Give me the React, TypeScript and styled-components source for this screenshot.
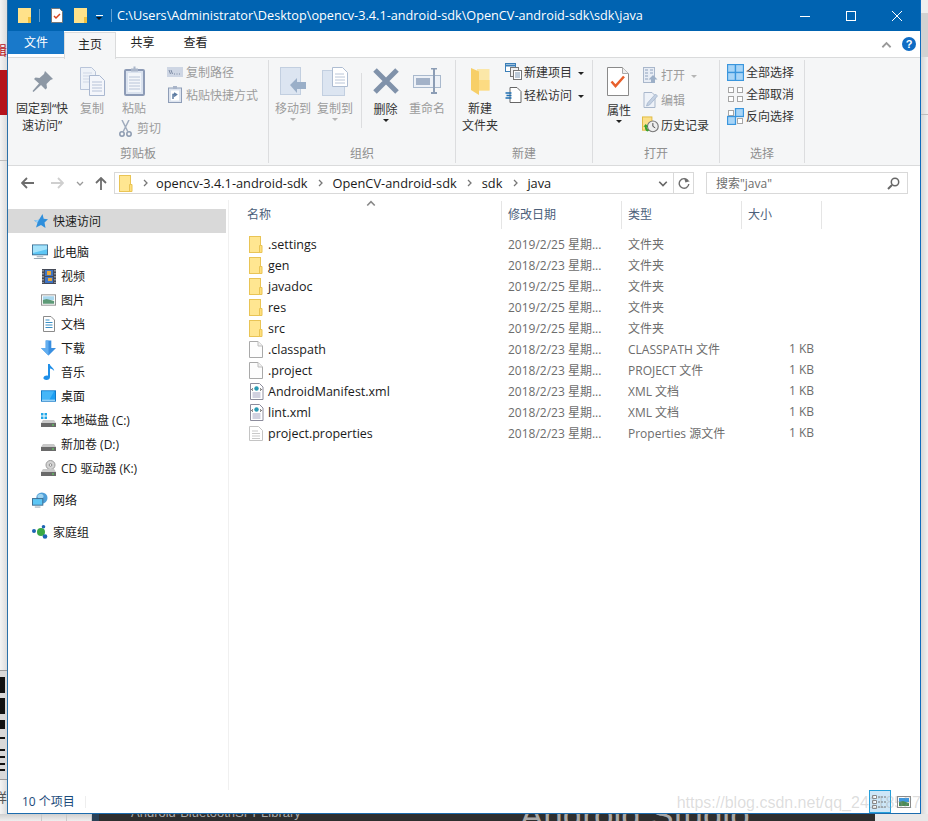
import * as React from "react";
import styled, { createGlobalStyle } from "styled-components";

const UI_FONT = `"Open Sans", "Noto Sans CJK SC", sans-serif`;

const GlobalStyle = createGlobalStyle`
  html, body { margin: 0; padding: 0; background: #ececec; }
  body { font-family: ${UI_FONT}; font-size: 12px; }
  * { box-sizing: border-box; }
`;

/* ---------- icons ---------- */

const Folder = () => (
  <svg width="14" height="17" viewBox="0 0 14 17">
    <rect x=".5" y=".5" width="11" height="16" fill="#ffe691" stroke="#e9c455" />
    <path d="M10.500 9.500h2.500v7h-2.500z" fill="#ffdf7c" stroke="#e9c455" />
  </svg>
);

const Page = () => (
  <svg width="14" height="17" viewBox="0 0 14 17">
    <path d="M.5.5h8.500l4.500 4.500v11.500h-13z" fill="#fdfdfd" stroke="#a9a9a9" />
    <path d="M9 .5v4.500h4.500" fill="#f1f1f1" stroke="#bdbdbd" />
  </svg>
);

const XmlFile = () => (
  <svg width="15" height="17" viewBox="0 0 15 17">
    <path d="M1.500.5h9l3.500 3.500v12.500h-12.500z" fill="#fff" stroke="#8c8c9c" />
    <circle cx="7.500" cy="5.500" r="2.200" fill="#2a9ab3" />
    <path d="M4 5.500l-1.500 1 1.500 1M11 5.500l1.500 1-1.500 1" fill="none" stroke="#555" />
    <path d="M3.500 10h8M3.500 12h8M3.500 14h8" stroke="#a3a3c0" />
  </svg>
);

const PropsFile = () => (
  <svg width="14" height="15" viewBox="0 0 14 15">
    <path d="M.5.5h9l4 4v10h-13z" fill="#fff" stroke="#c4c4c4" />
    <path d="M3 5h6M3 7.500h8M3 10h8M3 12.500h8" stroke="#c9c9c9" />
  </svg>
);

const TitleFolder = () => (
  <svg width="13" height="15" viewBox="0 0 13 15">
    <rect width="13" height="15" fill="#ffe28a" />
    <rect x="10" y="9" width="3" height="6" fill="#f0c040" />
  </svg>
);

const TitleCheckDoc = () => (
  <svg width="12" height="15" viewBox="0 0 12 15">
    <path d="M.5.5h8l3 3v11h-11z" fill="#fff" stroke="#777" />
    <path d="M3 8l2 2 4-4" fill="none" stroke="#d9431e" strokeWidth="1.500" />
  </svg>
);

const Pin = () => (
  <svg width="21" height="21" viewBox="0 0 21 21">
    <path d="M13 0l8 8-2.500 1-4 4 .5 4-1.500 1.500L9 14l-7.500 7-1-1L7 12.500 2 8l1.500-1.500 4 .5 4.500-4z" fill="#8d98a5" />
  </svg>
);

const CopyIcon = () => (
  <svg width="25" height="29" viewBox="0 0 25 29">
    <path d="M.5.5h11l4 4v18h-15z" fill="#eef2f8" stroke="#b9c5da" />
    <path d="M3 6h9M3 9h9M3 12h9M3 15h6" stroke="#cfd7e6" />
    <path d="M9.500 8.500h10l5 5v15h-15z" fill="#f4f6fb" stroke="#aab8d0" />
    <path d="M12 15h10M12 18h10M12 21h10M12 24h10" stroke="#b6c2d8" />
  </svg>
);

const PasteIcon = () => (
  <svg width="21" height="30" viewBox="0 0 21 30">
    <rect x="1" y="4" width="19" height="25" rx="1" fill="#dbe3ef" stroke="#8d9bb6" strokeWidth="2" />
    <rect x="4" y="7" width="13" height="19" fill="#f3f6fa" />
    <path d="M5 11h11M5 14h11M5 17h11M5 20h11M5 23h11" stroke="#b8c4d8" />
    <path d="M7 4V2.500h2.500V.5h2V2.500H14V5.500H7z" fill="#a9b5c9" />
  </svg>
);

const Scissors = () => (
  <svg width="13" height="17" viewBox="0 0 13 17">
    <circle cx="3" cy="14" r="2.200" fill="none" stroke="#8c9ab0" strokeWidth="1.500" />
    <circle cx="10" cy="14" r="2.200" fill="none" stroke="#8c9ab0" strokeWidth="1.500" />
    <path d="M4 12L10 0M9 12L3 0" stroke="#a0acbe" strokeWidth="1.500" />
  </svg>
);

const CopyPath = () => (
  <svg width="16" height="10" viewBox="0 0 16 10">
    <rect width="16" height="10" fill="#ced6e4" />
    <path d="M2 3l1.500 4M4 3l1.500 4" stroke="#7c8aa3" />
    <path d="M7 7h1M9.500 7h1M12 7h1" stroke="#7c8aa3" />
  </svg>
);

const PasteShortcut = () => (
  <svg width="14" height="17" viewBox="0 0 14 17">
    <rect x=".5" y="2" width="13" height="14.500" fill="#dde4ef" stroke="#8e9db7" />
    <rect x="3" y="4.500" width="8" height="10" fill="#fff" />
    <path d="M5 0h4v3H5z" fill="#a9b5c9" />
    <path d="M5 13V8.500h3.500M6 7l2.500 1.500L6 10.500" fill="none" stroke="#5f7da3" strokeWidth="1.500" />
  </svg>
);

const MoveTo = () => (
  <svg width="27" height="29" viewBox="0 0 27 29">
    <rect x=".5" y=".5" width="20" height="27" fill="#dce5f1" stroke="#c2cfe0" />
    <path d="M10 18l7-7v4h9v7h-9v4z" fill="#9aafc8" />
  </svg>
);

const CopyTo = () => (
  <svg width="27" height="29" viewBox="0 0 27 29">
    <rect x=".5" y="3.500" width="22" height="25" fill="#dce5f1" stroke="#c2cfe0" />
    <path d="M10.500.5h10l5 5v14h-15z" fill="#fff" stroke="#aebdd2" />
    <path d="M13 7h9M13 10h10M13 13h10M13 16h10" stroke="#bac6d8" />
  </svg>
);

const DeleteX = () => (
  <svg width="26" height="26" viewBox="0 0 26 26">
    <path d="M2 2l22 22M24 2L2 24" stroke="#8092aa" strokeWidth="5" />
  </svg>
);

const RenameIcon = () => (
  <svg width="28" height="26" viewBox="0 0 28 26">
    <rect x=".5" y="7.500" width="27" height="12" fill="#edf1f7" stroke="#a9b9cd" />
    <rect x="3" y="10" width="14" height="7" fill="#a3b2c8" />
    <path d="M18 .5h6M18 25h6M21 1v24" stroke="#8c9db5" strokeWidth="2" />
  </svg>
);

const NewFolder = () => (
  <svg width="19" height="27" viewBox="0 0 19 27">
    <path d="M6 1h12.500v21.500H6z" fill="#fbe7a8" />
    <path d="M0 0l8 3.500V27L0 22z" fill="#f7cf68" />
    <path d="M8 12h10.500v10.500H8z" fill="#fcdb82" />
  </svg>
);

const NewItem = () => (
  <svg width="17" height="17" viewBox="0 0 17 17">
    <rect x=".5" y=".5" width="10" height="8" fill="#fff" stroke="#3b7fb8" />
    <path d="M1 2.500h9" stroke="#3b7fb8" strokeWidth="2" />
    <rect x="5.500" y="4.500" width="8" height="9" fill="#f2f2f2" stroke="#777" />
    <rect x="8.500" y="7.500" width="8" height="9" fill="#fff" stroke="#777" />
    <path d="M10 10h5M10 12h5M10 14h5" stroke="#7d97b3" />
  </svg>
);

const EasyAccess = () => (
  <svg width="16" height="16" viewBox="0 0 16 16">
    <path d="M4.500.5h7l4 4v11h-11z" fill="#fff" stroke="#666" />
    <path d="M0 6h6M1 8.500h5M0 11h6" stroke="#1f6fb2" strokeWidth="1.300" />
  </svg>
);

const PropertiesIcon = () => (
  <svg width="22" height="29" viewBox="0 0 22 29">
    <path d="M.5.5h15l6 6v22h-21z" fill="#fff" stroke="#8a8a8a" />
    <path d="M15.500.5v6h6" fill="#eee" stroke="#aaa" />
    <path d="M4.500 14.500l4 4.500 8.500-9.500" fill="none" stroke="#e8602c" strokeWidth="2.500" />
  </svg>
);

const OpenIcon = () => (
  <svg width="15" height="16" viewBox="0 0 15 16">
    <rect x=".5" y=".5" width="11" height="15" fill="#e8edf5" stroke="#a9b7cb" />
    <path d="M2 3h3M7 3h3M2 6h3M7 6h3M2 9h3M2 12h3" stroke="#8fa2bd" />
    <path d="M10 8l4.500 4.500H12V16H8v-3.500H5.500z" fill="#9cafc7" />
  </svg>
);

const EditIcon = () => (
  <svg width="14" height="16" viewBox="0 0 14 16">
    <path d="M.5.5h8l3 3v12H.5z" fill="#eef2f8" stroke="#a9b7cb" />
    <path d="M3 14l1-3 8-9 2 2-8 9z" fill="#c4d1e2" stroke="#9fb0c8" strokeWidth=".7" />
  </svg>
);

const HistoryIcon = () => (
  <svg width="18" height="17" viewBox="0 0 18 17">
    <rect x=".5" y=".5" width="10" height="14" fill="#fbe08a" stroke="#e0b93f" />
    <circle cx="11.500" cy="10.500" r="5.700" fill="#eee" stroke="#777" strokeWidth="1.200" />
    <path d="M11.500 7v3.500l2.500 1.500" fill="none" stroke="#444" />
    <path d="M1.500 11l2.500-3 2.500 3H5c0 2 1 3 2.500 3.500L6 16c-2-.5-3-2-3-5z" fill="#35a12e" />
  </svg>
);

const BLUE_TILE = { fill: "#a8d5f7", stroke: "#3a96dd", strokeWidth: 1.300 };
const GRAY_TILE = { fill: "#fff", stroke: "#a6a6a6" };

const SelectAll = () => (
  <svg width="17" height="17" viewBox="0 0 17 17">
    <rect x=".5" y=".5" width="8" height="8" {...BLUE_TILE} />
    <rect x="8.500" y=".5" width="8" height="8" {...BLUE_TILE} />
    <rect x=".5" y="8.500" width="8" height="8" {...BLUE_TILE} />
    <rect x="8.500" y="8.500" width="8" height="8" {...BLUE_TILE} />
  </svg>
);

const SelectNone = () => (
  <svg width="17" height="17" viewBox="0 0 17 17">
    <rect x="1.500" y="1.500" width="5" height="5" {...GRAY_TILE} />
    <rect x="10.500" y="1.500" width="5" height="5" {...GRAY_TILE} />
    <rect x="1.500" y="10.500" width="5" height="5" {...GRAY_TILE} />
    <rect x="10.500" y="10.500" width="5" height="5" {...GRAY_TILE} />
  </svg>
);

const SelectInvert = () => (
  <svg width="17" height="17" viewBox="0 0 17 17">
    <rect x="1.500" y="2.500" width="5" height="5" {...GRAY_TILE} />
    <rect x="10.500" y="10.500" width="5" height="5" {...GRAY_TILE} />
    <rect x="8.500" y=".5" width="8" height="8" {...BLUE_TILE} />
    <rect x=".5" y="8.500" width="8" height="8" {...BLUE_TILE} />
  </svg>
);

const Star = () => (
  <svg width="14" height="14" viewBox="0 0 14 14">
    <path d="M8.500 0l1.200 4.800L14 5.300l-3.500 3.200L11.500 14 7 11 2 13.500 3.500 8.800 0 6.500l5-.8z" fill="#2f8fdc" />
    <path d="M0 6.500L5 5.700 3.500 8.800z" fill="#9bd0f5" />
  </svg>
);

const Monitor = () => (
  <svg width="17" height="16" viewBox="0 0 17 16">
    <rect x=".5" y=".5" width="16" height="10.500" fill="#5cc6f5" stroke="#3d6b8f" />
    <path d="M1 1h15v4L1 9z" fill="#a5e3fb" />
    <path d="M5 12.500h7v1H5zM2 14.500h13v1H2z" fill="#9aa9b5" />
  </svg>
);

const VideoIcon = () => (
  <svg width="14" height="15" viewBox="0 0 14 15">
    <rect width="14" height="15" fill="#454a57" />
    <rect x="3" y="1" width="8" height="6" fill="#3f74c4" />
    <rect x="3" y="8" width="8" height="6" fill="#3f74c4" />
    <path d="M5 2h4v4H5zM6 9h4v3H6z" fill="#e8a83a" />
    <path d="M1 1v13M13 1v13" stroke="#d8d8d8" strokeDasharray="1.500 1.500" />
  </svg>
);

const PictureIcon = () => (
  <svg width="16" height="12" viewBox="0 0 16 12">
    <rect x=".5" y=".5" width="15" height="11" fill="#fff" stroke="#8d8d8d" />
    <rect x="2" y="2" width="12" height="4" fill="#a9d7ee" />
    <path d="M2 6l4-1 8 2v3H2z" fill="#5d9a77" />
  </svg>
);

const DocIcon = () => (
  <svg width="12" height="16" viewBox="0 0 12 16">
    <path d="M.5.5h7.500l3.500 3.500v11.500h-11z" fill="#fff" stroke="#8b8b8b" />
    <path d="M2.500 4h4M2.500 6.500h7M2.500 9h7M2.500 11.500h7" stroke="#3b8fc4" />
  </svg>
);

const DownloadIcon = () => (
  <svg width="16" height="16" viewBox="0 0 16 16">
    <path d="M5 0h6v8h5l-8 8-8-8h5z" fill="#3a8fe0" />
    <path d="M5 0h3v16L0 8h5z" fill="#62aef0" />
  </svg>
);

const MusicIcon = () => (
  <svg width="12" height="16" viewBox="0 0 12 16">
    <path d="M5 0h1.800c.4 2.500 4 3.500 4.400 7-1.300-1.500-2.700-2.300-4.200-2.500V13c0 1.800-1.500 3-3.500 3S0 15 .5 13.500 3 11 5 11.700z" fill="#1f8fe8" />
  </svg>
);

const DesktopIcon = () => (
  <svg width="16" height="12" viewBox="0 0 16 12">
    <rect x=".5" y=".5" width="15" height="11" fill="#1e9ff2" stroke="#0c74c4" />
    <path d="M1 1h13L9 10H1z" fill="#45b6f8" />
    <path d="M1 10.500h14" stroke="#d9f1ff" />
  </svg>
);

const Drive = ({ win }: { win?: boolean }) => (
  <svg width="15" height="14" viewBox="0 0 15 14">
    {win && <path d="M0 0h2.500v2.500H0zM3.500 0H6v2.500H3.500zM0 3.500h2.500V6H0zM3.500 3.500H6V6H3.500z" fill="#22a7e8" />}
    <path d="M2 7h11l2 3H0z" fill="#c9c9c9" />
    <rect y="10" width="15" height="4" fill="#6a6a6a" />
    <rect x="11" y="11.500" width="2" height="1" fill="#5ce05c" />
  </svg>
);

const CdDrive = () => (
  <svg width="15" height="16" viewBox="0 0 15 16">
    <circle cx="9.500" cy="5" r="4.500" fill="#d4d4d4" stroke="#9c9c9c" />
    <circle cx="9.500" cy="5" r="1.300" fill="#fff" stroke="#8c8c8c" />
    <path d="M2 9h11l2 3H0z" fill="#c9c9c9" />
    <rect y="12" width="15" height="4" fill="#6a6a6a" />
    <rect x="11" y="13.500" width="2" height="1" fill="#5ce05c" />
  </svg>
);

const NetworkIcon = () => (
  <svg width="17" height="16" viewBox="0 0 17 16">
    <circle cx="10.500" cy="6" r="6" fill="#4f9fd8" />
    <path d="M6 3c2-2 5-2 6 0s-1 4-3 4-4-2-3-4z" fill="#9ed3f0" />
    <rect x=".5" y="6.500" width="11" height="7" fill="#5cc6f5" stroke="#3d6b8f" />
    <path d="M3 15.500h6" stroke="#8e9eab" />
  </svg>
);

const HomegroupIcon = () => (
  <svg width="16" height="14" viewBox="0 0 16 14">
    <circle cx="2" cy="6" r="2" fill="#1e64b4" />
    <circle cx="9" cy="7" r="4" fill="#3aa845" />
    <circle cx="11.500" cy="1.800" r="1.800" fill="#1e64b4" />
    <circle cx="13" cy="11.500" r="2.300" fill="#1e64b4" />
  </svg>
);

const DetailsView = () => (
  <svg width="16" height="14" viewBox="0 0 16 14">
    <path d="M.5.5h4v3h-4zM.5 5.500h4v3h-4zM.5 10.500h4v3h-4z" fill="#fff" stroke="#888" />
    <path d="M6 2h9M6 7h9M6 12h9" stroke="#777" strokeDasharray="2 1" />
  </svg>
);

const ThumbView = () => (
  <svg width="14" height="12" viewBox="0 0 14 12">
    <rect x=".5" y=".5" width="13" height="11" fill="#fff" stroke="#8a8a8a" />
    <rect x="2" y="2" width="10" height="4" fill="#3f97dd" />
    <path d="M2 6l4-1 6 2v3H2z" fill="#4b8b57" />
  </svg>
);

const Chevron = ({ dir, color = "#777", size = 8 }: { dir: "up" | "down" | "right"; color?: string; size?: number }) => {
  const d = dir === "up" ? "M1 6l3-3 3 3" : dir === "down" ? "M1 3l3 3 3-3" : "M3 1l3 3-3 3";
  return (
    <svg width={size} height={size} viewBox="0 0 8 8">
      <path d={d} fill="none" stroke={color} strokeWidth="1.300" />
    </svg>
  );
};

const ArrowLeft = () => (
  <svg width="13" height="12" viewBox="0 0 13 12">
    <path d="M6 1L1 6l5 5M1 6h12" fill="none" stroke="#6d6d6d" strokeWidth="1.800" />
  </svg>
);

const ArrowRight = () => (
  <svg width="13" height="12" viewBox="0 0 13 12">
    <path d="M7 1l5 5-5 5M12 6H0" fill="none" stroke="#cfcfcf" strokeWidth="1.800" />
  </svg>
);

const ArrowUp = () => (
  <svg width="12" height="13" viewBox="0 0 12 13">
    <path d="M1 6l5-5 5 5M6 1v12" fill="none" stroke="#6d6d6d" strokeWidth="1.800" />
  </svg>
);

const Refresh = () => (
  <svg width="12" height="13" viewBox="0 0 12 13">
    <path d="M9.800 3.500A4.800 4.800 0 1 0 10.800 7" fill="none" stroke="#6d6d6d" strokeWidth="1.400" />
    <path d="M6.800 0v5h4.500z" fill="#6d6d6d" transform="rotate(-15 9 3)" />
  </svg>
);

const Magnifier = () => (
  <svg width="13" height="13" viewBox="0 0 13 13">
    <circle cx="8" cy="5" r="3.700" fill="none" stroke="#666" strokeWidth="1.500" />
    <path d="M5 8l-4 4" stroke="#666" strokeWidth="2" />
  </svg>
);

/* ---------- backdrop around the window ---------- */

const Screen = styled.div`
  width: 928px;
  height: 821px;
  overflow: hidden;
  display: grid;
  grid-template-columns: 7px 914px 7px;
  grid-template-rows: 814px 7px;
`;

const LeftStrip = styled.div`
  display: flex;
  flex-direction: column;
  background: linear-gradient(to right, #f4f4f4, #dcdcdc);
`;

const RightStrip = styled.div`
  display: flex;
  flex-direction: column;
  background: linear-gradient(to left, #f2f2f2, #d6d6d6);
`;

const StripBlock = styled.div<{ $h: number; $bg?: string; $line?: boolean }>`
  flex: none;
  height: ${p => p.$h}px;
  background: ${p => p.$bg || "transparent"};
  border-bottom: ${p => (p.$line ? "1px solid #bdbdbd" : "none")};
`;

const EdgeGlyph = styled.div<{ $color: string; $top: number; $bottom: number }>`
  flex: none;
  height: 13px;
  margin: ${p => p.$top}px 0 ${p => p.$bottom}px;
  color: ${p => p.$color};
  font-size: 13px;
  line-height: 13px;
  overflow: hidden;
  direction: rtl;
`;

const BlackBars = styled.div`
  flex: none;
  height: 110px;
  border-top: 1px solid #9a9a9a;
  border-bottom: 1px solid #9a9a9a;
  background:
    linear-gradient(
      to bottom,
      transparent 0 6px,
      #111 6px 22px,
      transparent 22px 27px,
      #111 27px 43px,
      transparent 43px 49px,
      #111 49px 58px,
      transparent 58px 66px,
      #111 66px 68px,
      transparent 68px 78px,
      #111 78px 80px,
      transparent 80px 85px,
      #111 85px 87px,
      transparent 87px 92px,
      #111 92px 94px,
      transparent 94px 98px,
      #111 98px 100px,
      transparent 100px
    )
    left / 5px 100% no-repeat,
    #d9d9d9;
`;

const BottomStrip = styled.div`
  grid-column: 1 / 4;
  display: flex;
  background: #e8e8e8;
`;

const BottomCell = styled.div<{ $w: number }>`
  flex: none;
  width: ${p => p.$w}px;
  border-right: 1px solid #c9c9c9;
  background: linear-gradient(to bottom, #cfcfcf, #efefef);
`;

const DarkBar = styled.div`
  flex: none;
  width: 783px;
  background: #2e2e2e;
  color: #a8a8a8;
  overflow: hidden;
  display: flex;
`;

const BarIcon = styled.div`
  flex: none;
  width: 7px;
  background: #2a4258;
`;

const BarSmall = styled.div`
  margin: -9px 0 0 32px;
  flex: none;
  width: 389px;
  font-family: "Liberation Sans", sans-serif;
  font-size: 13px;
  line-height: 15px;
  white-space: nowrap;
`;

const BarLarge = styled.div`
  margin-top: -18px;
  flex: none;
  font-family: "Liberation Sans", sans-serif;
  font-size: 35px;
  line-height: 38px;
  white-space: nowrap;
`;

/* ---------- window ---------- */

const Window = styled.div`
  position: relative;
  display: flex;
  flex-direction: column;
  background: #fff;
  border-left: 1px solid #2b70a8;
  border-right: 1px solid #0f6cbd;
  border-bottom: 1px solid #1c6cae;
`;

const TitleBar = styled.div`
  flex: none;
  height: 31px;
  background: #0063b1;
  color: #fff;
  display: flex;
  align-items: center;
  padding-left: 10px;
  white-space: nowrap;
`;

const QuickSep = styled.div<{ $after: number }>`
  width: 1px;
  height: 13px;
  margin: 0 ${p => p.$after}px 0 8px;
  background: #5d9dd0;
`;

const QuickSlot = styled.div<{ $left?: number }>`
  margin-left: ${p => p.$left || 0}px;
  display: flex;
`;

const QuickMenu = styled.div`
  width: 7px;
  height: 6px;
  margin: 4px 0 0 9px;
  border-top: 1px solid #fff;
  position: relative;
  &::after {
    content: "";
    position: absolute;
    left: 0;
    top: 1px;
    border: 3.500px solid transparent;
    border-top-color: #111;
    border-bottom: none;
  }
`;

const TitleText = styled.div`
  flex: 1;
  font-size: 12.700px;
  line-height: 31px;
`;

const WinButtons = styled.div`
  display: flex;
`;

const WinButton = styled.div`
  width: 46px;
  height: 31px;
  display: flex;
  align-items: center;
  justify-content: center;
`;

const TabRow = styled.div`
  flex: none;
  height: 26px;
  display: flex;
  align-items: flex-start;
  position: relative;
`;

const FileTab = styled.div`
  width: 56px;
  height: 23px;
  background: #1979ca;
  color: #fff;
  text-align: center;
  line-height: 23px;
`;

const Tab = styled.div<{ $active?: boolean }>`
  width: ${p => (p.$active ? 52 : 53)}px;
  height: ${p => (p.$active ? 27 : 23)}px;
  line-height: 23px;
  margin-top: ${p => (p.$active ? 1 : 0)}px;
  text-align: center;
  color: #222;
  background: ${p => (p.$active ? "#f5f6f7" : "transparent")};
  border: ${p => (p.$active ? "1px solid #dadbdc" : "none")};
  border-bottom: none;
  position: relative;
  z-index: 1;
`;

const TabTools = styled.div`
  margin-left: auto;
  height: 26px;
  display: flex;
  align-items: center;
  gap: 10px;
  padding-right: 4px;
`;

const HelpDot = styled.div`
  width: 14px;
  height: 14px;
  border-radius: 50%;
  background: #0f6cc4;
  color: #fff;
  font: bold 11px/14px "Liberation Sans", sans-serif;
  text-align: center;
`;

const Ribbon = styled.div`
  flex: none;
  height: 109px;
  background: #f5f6f7;
  border-top: 1px solid #dadbdc;
  border-bottom: 1px solid #dadbdc;
  padding: 2px 0;
  display: flex;
`;

const Group = styled.div<{ $w: number }>`
  flex: none;
  width: ${p => p.$w}px;
  border-right: 1px solid #dcdddf;
  display: flex;
  flex-direction: column;
`;

const GroupBody = styled.div<{ $pad?: number }>`
  flex: 1;
  display: flex;
  min-height: 0;
  padding-left: ${p => p.$pad || 0}px;
`;

const GroupLabel = styled.div`
  flex: none;
  height: 18px;
  line-height: 18px;
  text-align: center;
  color: #8f8f8f;
`;

const BigButton = styled.div<{ $w: number; $off?: boolean }>`
  flex: none;
  width: ${p => p.$w}px;
  padding-top: 6px;
  display: flex;
  flex-direction: column;
  align-items: center;
  color: ${p => (p.$off ? "#9c9c9c" : "#333")};
`;

const BigIcon = styled.div<{ $shift?: number }>`
  height: 30px;
  margin-right: ${p => p.$shift || 0}px;
  display: flex;
  align-items: center;
  justify-content: center;
`;

const BigLabel = styled.div<{ $top?: number }>`
  margin-top: ${p => p.$top ?? 4}px;
  line-height: 17px;
  text-align: center;
  white-space: nowrap;
`;

const Caret = styled.div<{ $off?: boolean }>`
  margin-top: 1px;
  border: 3px solid transparent;
  border-top-color: ${p => (p.$off ? "#b5b5b5" : "#222")};
  border-bottom: none;
`;

const PasteStack = styled.div`
  flex: none;
  width: 52px;
  display: flex;
  flex-direction: column;
`;

const SmallStack = styled.div<{ $row: number; $top: number; $left?: number }>`
  flex: none;
  margin-left: ${p => p.$left || 0}px;
  padding-top: ${p => p.$top}px;
  display: grid;
  grid-auto-rows: ${p => p.$row}px;
`;

const SmallButton = styled.div<{ $slot: number; $off?: boolean; $gap?: number }>`
  display: flex;
  align-items: center;
  gap: ${p => p.$gap ?? 3}px;
  white-space: nowrap;
  color: ${p => (p.$off ? "#9c9c9c" : "#333")};
  > svg {
    flex: none;
    width: ${p => p.$slot}px;
  }
`;

const CutButton = styled(SmallButton)`
  padding: 2px 0 0 7px;
`;

const SmallCaret = styled.div<{ $off?: boolean }>`
  margin-left: 4px;
  border: 3px solid transparent;
  border-top-color: ${p => (p.$off ? "#b5b5b5" : "#222")};
  border-bottom: none;
  margin-top: 3px;
`;

const InnerSep = styled.div`
  flex: none;
  width: 1px;
  height: 55px;
  margin: 13px 3px 0 5px;
  background: #dcdddf;
`;

const AddressRow = styled.div`
  flex: none;
  height: 34px;
  display: flex;
  align-items: center;
`;

const NavArrows = styled.div`
  flex: none;
  width: 106px;
  padding-left: 13px;
  display: flex;
  align-items: center;
`;

const ArrowSlot = styled.span<{ $left: number }>`
  margin-left: ${p => p.$left}px;
  display: flex;
`;

const AddressBox = styled.div`
  flex: none;
  width: 580px;
  height: 22px;
  border: 1px solid #d9d9d9;
  display: flex;
  align-items: center;
  padding-left: 4px;
`;

const Crumb = styled.span`
  font-size: 12.800px;
  color: #1a1a1a;
  line-height: 20px;
`;

const CrumbSep = styled.span<{ $w: number }>`
  width: ${p => p.$w}px;
  display: flex;
  justify-content: center;
`;

const AddressEnd = styled.div`
  margin-left: auto;
  display: flex;
  align-items: center;
  height: 100%;
`;

const EndCell = styled.div<{ $line?: boolean }>`
  width: 20px;
  height: 100%;
  display: flex;
  align-items: center;
  justify-content: center;
  border-left: ${p => (p.$line ? "1px solid #d9d9d9" : "none")};
`;

const SearchBox = styled.div`
  flex: none;
  width: 202px;
  height: 22px;
  margin-left: 12px;
  border: 1px solid #d9d9d9;
  display: flex;
  align-items: center;
  justify-content: space-between;
  padding: 0 7px 0 9px;
  color: #6d6d6d;
`;

const Body = styled.div`
  flex: 1;
  min-height: 0;
  display: flex;
`;

const NavPane = styled.div`
  flex: none;
  width: 221px;
  border-right: 1px solid #f0f0f0;
  padding: 9px 2px 0 0;
`;

const NavRow = styled.div<{ $child?: boolean; $active?: boolean; $gap?: number }>`
  height: 24px;
  margin-top: ${p => p.$gap || 0}px;
  padding-left: ${p => (p.$active ? 26 : p.$child ? 33 : 24)}px;
  background: ${p => (p.$active ? "#d9d9d9" : "transparent")};
  display: flex;
  align-items: center;
  color: #1a1a1a;
  white-space: nowrap;
`;

const NavIcon = styled.div<{ $child?: boolean; $active?: boolean }>`
  flex: none;
  width: ${p => (p.$active ? 14 : p.$child ? 15 : 16)}px;
  margin-right: 5px;
  display: flex;
  justify-content: center;
`;

const MainPane = styled.div`
  flex: 1;
  min-width: 0;
`;

const COLUMNS = "273px 120px 120px 80px";

const HeaderRow = styled.div`
  height: 28px;
  margin-top: 1px;
  display: grid;
  grid-template-columns: ${COLUMNS};
`;

const HeaderCell = styled.div<{ $pad: number }>`
  position: relative;
  padding-left: ${p => p.$pad}px;
  border-right: 1px solid #e5e5e5;
  color: #4c607a;
  line-height: 27px;
`;

const SortMark = styled.div`
  position: absolute;
  left: 137px;
  top: -3px;
  display: flex;
`;

const FileList = styled.div`
  padding-top: 5px;
`;

const FileRow = styled.div`
  height: 21px;
  display: grid;
  grid-template-columns: ${COLUMNS};
  align-items: center;
  color: #6d6d6d;
`;

const NameCell = styled.div`
  padding-left: 20px;
  display: flex;
  align-items: center;
  color: #1a1a1a;
  font-size: 12.500px;
`;

const FileIconSlot = styled.div`
  flex: none;
  width: 19px;
  display: flex;
`;

const InfoCell = styled.div<{ $right?: boolean }>`
  padding: ${p => (p.$right ? "0 8px 2px 0" : "0 0 2px 6px")};
  text-align: ${p => (p.$right ? "right" : "left")};
  white-space: nowrap;
`;

const StatusBar = styled.div`
  flex: none;
  height: 23px;
  display: flex;
  align-items: center;
  padding-left: 14px;
  color: #1a4a7a;
`;

const StatusCount = styled.div`
  width: 64px;
  height: 12px;
  line-height: 12px;
  border-right: 1px solid #eee;
`;

const ViewButtons = styled.div`
  margin-left: auto;
  height: 100%;
  display: flex;
  align-items: center;
  padding-right: 8px;
`;

const ViewButton = styled.div<{ $active?: boolean }>`
  width: ${p => (p.$active ? 22 : 17)}px;
  margin-left: ${p => (p.$active ? 0 : 4)}px;
  height: 23px;
  display: flex;
  align-items: center;
  justify-content: center;
  background: ${p => (p.$active ? "#cde6f7" : "transparent")};
  border: ${p => (p.$active ? "1px solid #26a0da" : "none")};
`;

const Watermark = styled.div`
  position: absolute;
  right: -1px;
  bottom: 0;
  font-family: "Liberation Sans", sans-serif;
  font-size: 16px;
  line-height: 20px;
  color: rgba(150, 150, 150, 0.32);
  white-space: nowrap;
  pointer-events: none;
`;

/* ---------- data ---------- */

const FOLDER_ROW = { type: "文件夹", size: "" };

const FILES: { name: string; date: string; type: string; size: string; icon: React.ReactNode }[] = [
  { name: ".settings", date: "2019/2/25 星期...", ...FOLDER_ROW, icon: <Folder /> },
  { name: "gen", date: "2018/2/23 星期...", ...FOLDER_ROW, icon: <Folder /> },
  { name: "javadoc", date: "2019/2/25 星期...", ...FOLDER_ROW, icon: <Folder /> },
  { name: "res", date: "2019/2/25 星期...", ...FOLDER_ROW, icon: <Folder /> },
  { name: "src", date: "2019/2/25 星期...", ...FOLDER_ROW, icon: <Folder /> },
  { name: ".classpath", date: "2018/2/23 星期...", type: "CLASSPATH 文件", size: "1 KB", icon: <Page /> },
  { name: ".project", date: "2018/2/23 星期...", type: "PROJECT 文件", size: "1 KB", icon: <Page /> },
  { name: "AndroidManifest.xml", date: "2018/2/23 星期...", type: "XML 文档", size: "1 KB", icon: <XmlFile /> },
  { name: "lint.xml", date: "2018/2/23 星期...", type: "XML 文档", size: "1 KB", icon: <XmlFile /> },
  { name: "project.properties", date: "2018/2/23 星期...", type: "Properties 源文件", size: "1 KB", icon: <PropsFile /> },
];

const NAV: { label: string; icon: React.ReactNode; child?: boolean; active?: boolean; gap?: number }[] = [
  { label: "快速访问", icon: <Star />, active: true },
  { label: "此电脑", icon: <Monitor />, gap: 7 },
  { label: "视频", icon: <VideoIcon />, child: true },
  { label: "图片", icon: <PictureIcon />, child: true },
  { label: "文档", icon: <DocIcon />, child: true },
  { label: "下载", icon: <DownloadIcon />, child: true },
  { label: "音乐", icon: <MusicIcon />, child: true },
  { label: "桌面", icon: <DesktopIcon />, child: true },
  { label: "本地磁盘 (C:)", icon: <Drive win />, child: true },
  { label: "新加卷 (D:)", icon: <Drive />, child: true },
  { label: "CD 驱动器 (K:)", icon: <CdDrive />, child: true },
  { label: "网络", icon: <NetworkIcon />, gap: 8 },
  { label: "家庭组", icon: <HomegroupIcon />, gap: 8 },
];

const CRUMBS = ["opencv-3.4.1-android-sdk", "OpenCV-android-sdk", "sdk", "java"];

const TITLE_PATH = "C:\\Users\\Administrator\\Desktop\\opencv-3.4.1-android-sdk\\OpenCV-android-sdk\\sdk\\java";

export default function App() {
  return (
    <Screen>
      <GlobalStyle />
      <LeftStrip>
        <EdgeGlyph $color="#b5121b" $top={44} $bottom={13}>
          辑
        </EdgeGlyph>
        <StripBlock $h={45} $bg="#b5121b" />
        <StripBlock $h={46} $line />
        <StripBlock $h={509} />
        <BlackBars />
        <EdgeGlyph $color="#555" $top={11} $bottom={0}>
          详
        </EdgeGlyph>
      </LeftStrip>

      <Window>
        <TitleBar>
          <QuickSlot>
            <TitleFolder />
          </QuickSlot>
          <QuickSep $after={11} />
          <QuickSlot>
            <TitleCheckDoc />
          </QuickSlot>
          <QuickSlot $left={11}>
            <TitleFolder />
          </QuickSlot>
          <QuickMenu />
          <QuickSep $after={5} />
          <TitleText>{TITLE_PATH}</TitleText>
          <WinButtons>
            <WinButton>
              <svg width="10" height="10" viewBox="0 0 10 10">
                <path d="M0 5.500h10" stroke="#fff" />
              </svg>
            </WinButton>
            <WinButton>
              <svg width="10" height="10" viewBox="0 0 10 10">
                <rect x=".5" y=".5" width="9" height="9" fill="none" stroke="#fff" />
              </svg>
            </WinButton>
            <WinButton>
              <svg width="10" height="10" viewBox="0 0 10 10">
                <path d="M0 0l10 10M10 0L0 10" stroke="#fff" />
              </svg>
            </WinButton>
          </WinButtons>
        </TitleBar>

        <TabRow>
          <FileTab>文件</FileTab>
          <Tab $active>主页</Tab>
          <Tab>共享</Tab>
          <Tab>查看</Tab>
          <TabTools>
            <Chevron dir="up" size={11} color="#999" />
            <HelpDot>?</HelpDot>
          </TabTools>
        </TabRow>

        <Ribbon>
          <Group $w={261}>
            <GroupBody $pad={4}>
              <BigButton $w={60}>
                <BigIcon>
                  <Pin />
                </BigIcon>
                <BigLabel>
                  固定到“快
                  <br />
                  速访问”
                </BigLabel>
              </BigButton>
              <BigButton $w={40} $off>
                <BigIcon>
                  <CopyIcon />
                </BigIcon>
                <BigLabel>复制</BigLabel>
              </BigButton>
              <PasteStack>
                <BigButton $w={44} $off>
                  <BigIcon>
                    <PasteIcon />
                  </BigIcon>
                  <BigLabel>粘贴</BigLabel>
                </BigButton>
                <CutButton $slot={13} $gap={5} $off>
                  <Scissors />
                  剪切
                </CutButton>
              </PasteStack>
              <SmallStack $row={23} $top={0} $left={3}>
                <SmallButton $slot={16} $off>
                  <CopyPath />
                  复制路径
                </SmallButton>
                <SmallButton $slot={16} $off>
                  <PasteShortcut />
                  粘贴快捷方式
                </SmallButton>
              </SmallStack>
            </GroupBody>
            <GroupLabel>剪贴板</GroupLabel>
          </Group>

          <Group $w={187}>
            <GroupBody $pad={3}>
              <BigButton $w={42} $off>
                <BigIcon>
                  <MoveTo />
                </BigIcon>
                <BigLabel>移动到</BigLabel>
                <Caret $off />
              </BigButton>
              <BigButton $w={42} $off>
                <BigIcon>
                  <CopyTo />
                </BigIcon>
                <BigLabel>复制到</BigLabel>
                <Caret $off />
              </BigButton>
              <InnerSep />
              <BigButton $w={41}>
                <BigIcon>
                  <DeleteX />
                </BigIcon>
                <BigLabel $top={5}>删除</BigLabel>
                <Caret />
              </BigButton>
              <BigButton $w={42} $off>
                <BigIcon>
                  <RenameIcon />
                </BigIcon>
                <BigLabel>重命名</BigLabel>
              </BigButton>
            </GroupBody>
            <GroupLabel>组织</GroupLabel>
          </Group>

          <Group $w={137}>
            <GroupBody $pad={2}>
              <BigButton $w={44}>
                <BigIcon>
                  <NewFolder />
                </BigIcon>
                <BigLabel>
                  新建
                  <br />
                  文件夹
                </BigLabel>
              </BigButton>
              <SmallStack $row={23} $top={0} $left={3}>
                <SmallButton $slot={17} $gap={2}>
                  <NewItem />
                  新建项目
                  <SmallCaret />
                </SmallButton>
                <SmallButton $slot={17} $gap={2}>
                  <EasyAccess />
                  轻松访问
                  <SmallCaret />
                </SmallButton>
              </SmallStack>
            </GroupBody>
            <GroupLabel>新建</GroupLabel>
          </Group>

          <Group $w={127}>
            <GroupBody $pad={4}>
              <BigButton $w={44}>
                <BigIcon $shift={3}>
                  <PropertiesIcon />
                </BigIcon>
                <BigLabel $top={6}>属性</BigLabel>
                <Caret />
              </BigButton>
              <SmallStack $row={25} $top={2} $left={1}>
                <SmallButton $slot={17} $gap={2} $off>
                  <OpenIcon />
                  打开
                  <SmallCaret $off />
                </SmallButton>
                <SmallButton $slot={17} $gap={2} $off>
                  <EditIcon />
                  编辑
                </SmallButton>
                <SmallButton $slot={17} $gap={2}>
                  <HistoryIcon />
                  历史记录
                </SmallButton>
              </SmallStack>
            </GroupBody>
            <GroupLabel>打开</GroupLabel>
          </Group>

          <Group $w={85}>
            <GroupBody $pad={7}>
              <SmallStack $row={22} $top={1}>
                <SmallButton $slot={17} $gap={2}>
                  <SelectAll />
                  全部选择
                </SmallButton>
                <SmallButton $slot={17} $gap={2}>
                  <SelectNone />
                  全部取消
                </SmallButton>
                <SmallButton $slot={17} $gap={2}>
                  <SelectInvert />
                  反向选择
                </SmallButton>
              </SmallStack>
            </GroupBody>
            <GroupLabel>选择</GroupLabel>
          </Group>
        </Ribbon>

        <AddressRow>
          <NavArrows>
            <ArrowLeft />
            <ArrowSlot $left={17}>
              <ArrowRight />
            </ArrowSlot>
            <ArrowSlot $left={12}>
              <Chevron dir="down" color="#999" />
            </ArrowSlot>
            <ArrowSlot $left={11}>
              <ArrowUp />
            </ArrowSlot>
          </NavArrows>
          <AddressBox>
            <Folder />
            <CrumbSep $w={23}>
              <Chevron dir="right" />
            </CrumbSep>
            {CRUMBS.map((crumb, i) => (
              <React.Fragment key={crumb}>
                {i > 0 && (
                  <CrumbSep $w={25}>
                    <Chevron dir="right" />
                  </CrumbSep>
                )}
                <Crumb>{crumb}</Crumb>
              </React.Fragment>
            ))}
            <AddressEnd>
              <EndCell>
                <Chevron dir="down" size={10} color="#666" />
              </EndCell>
              <EndCell $line>
                <Refresh />
              </EndCell>
            </AddressEnd>
          </AddressBox>
          <SearchBox>
            搜索"java"
            <Magnifier />
          </SearchBox>
        </AddressRow>

        <Body>
          <NavPane>
            {NAV.map(item => (
              <NavRow key={item.label} $child={item.child} $active={item.active} $gap={item.gap}>
                <NavIcon $child={item.child} $active={item.active}>
                  {item.icon}
                </NavIcon>
                {item.label}
              </NavRow>
            ))}
          </NavPane>
          <MainPane>
            <HeaderRow>
              <HeaderCell $pad={18}>
                名称
                <SortMark>
                  <Chevron dir="up" size={10} color="#888" />
                </SortMark>
              </HeaderCell>
              <HeaderCell $pad={6}>修改日期</HeaderCell>
              <HeaderCell $pad={6}>类型</HeaderCell>
              <HeaderCell $pad={6}>大小</HeaderCell>
            </HeaderRow>
            <FileList>
              {FILES.map(file => (
                <FileRow key={file.name}>
                  <NameCell>
                    <FileIconSlot>{file.icon}</FileIconSlot>
                    {file.name}
                  </NameCell>
                  <InfoCell>{file.date}</InfoCell>
                  <InfoCell>{file.type}</InfoCell>
                  <InfoCell $right>{file.size}</InfoCell>
                </FileRow>
              ))}
            </FileList>
          </MainPane>
        </Body>

        <StatusBar>
          <StatusCount>10 个项目</StatusCount>
          <ViewButtons>
            <ViewButton $active>
              <DetailsView />
            </ViewButton>
            <ViewButton>
              <ThumbView />
            </ViewButton>
          </ViewButtons>
        </StatusBar>
        <Watermark>https://blog.csdn.net/qq_24118527</Watermark>
      </Window>

      <RightStrip>
        <StripBlock $h={13} $bg="#efefef" />
        <StripBlock $h={44} $bg="#d2d2d2" />
        <StripBlock $h={58} $line />
      </RightStrip>

      <BottomStrip>
        <BottomCell $w={42} />
        <BottomCell $w={25} />
        <BottomCell $w={25} />
        <DarkBar>
          <BarIcon />
          <BarSmall>Android-BluetoothSPPLibrary</BarSmall>
          <BarLarge>Android Studio</BarLarge>
        </DarkBar>
      </BottomStrip>
    </Screen>
  );
}
